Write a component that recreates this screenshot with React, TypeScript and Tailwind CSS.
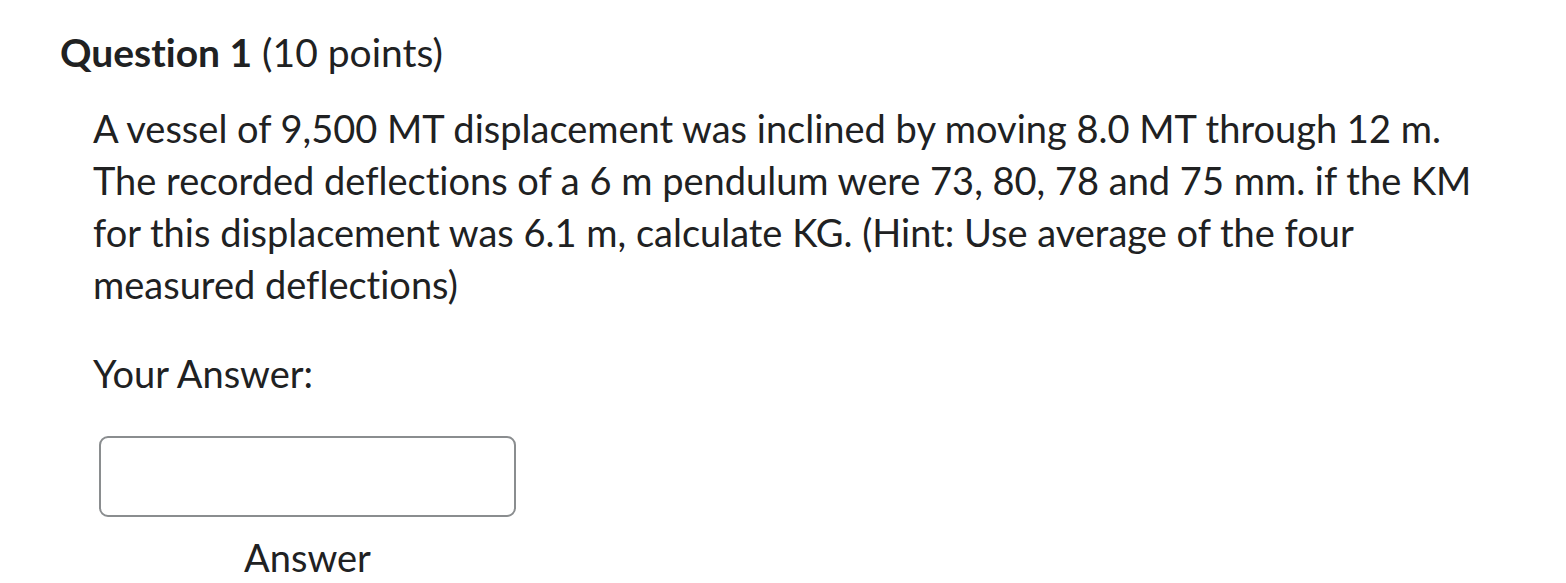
import React from 'react';

export default function App() {
  return (
    <div
      className="w-[1566px] h-[583px] bg-white text-[#202122] overflow-hidden [font-variant-ligatures:none]"
      style={{ fontFamily: 'Lato, "Noto Sans", sans-serif' }}
    >
      <div className="pl-[60px] pt-[28px]">
        <h1 className="text-[39px] leading-[48px]">
          <span className="font-bold">Question 1</span> (10 points)
        </h1>
        <div className="pl-[33px] pt-[26px]">
          <p className="text-[38px] leading-[52px] w-[1410px]">
            A vessel of 9,500 MT displacement was inclined by moving 8.0 MT through 12 m. The recorded deflections of a 6 m pendulum were 73, 80, 78 and 75 mm. if the KM for this displacement was 6.1 m, calculate KG. (Hint: Use average of the four measured deflections)
          </p>
          <p className="text-[38px] leading-[52px] mt-[37px]">Your Answer:</p>
          <div className="mt-[37px] ml-[6px] w-[417px] flex flex-col items-center">
            <input
              type="text"
              className="w-full h-[81px] rounded-[9px] border-2 border-[#8a8d8f] bg-white outline-none"
            />
            <span className="mt-[18px] text-[38px] leading-[44px]">Answer</span>
          </div>
        </div>
      </div>
    </div>
  );
}
